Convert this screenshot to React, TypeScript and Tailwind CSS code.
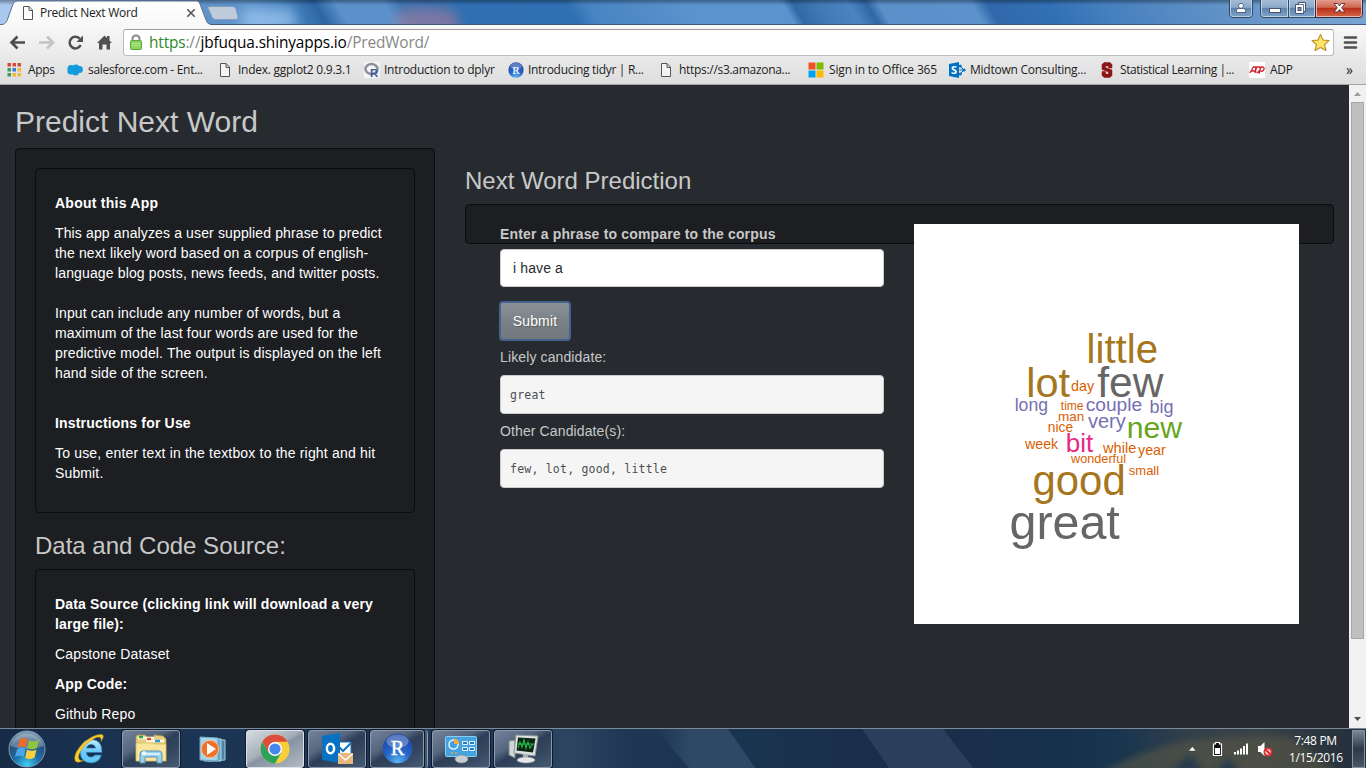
import React from "react";

const SEGOE = "font-['Open_Sans','Noto_Sans',sans-serif]";

function TabStrip() {
  return (
    <header className="relative h-[25px] w-full shrink-0 overflow-hidden bg-[#5a8fc8]">
      <div className="absolute -left-2 top-0 h-[25px] w-[1390px] skew-x-[30deg] bg-[linear-gradient(90deg,#a9c8f0_0px,#a9c8f0_20px,#5f93c9_215px,#5e95cd_260px,#4682bf_300px,#2c65a3_328px,#5b91cb_350px,#5b91cb_398px,#3a73b0_415px,#2f6fb2_470px,#2f70b3_580px,#4884c3_600px,#5a93cd_700px,#5a93cd_796px,#3168a6_806px,#4179b6_830px,#4a84c2_862px,#2f67a4_880px,#5b90c9_892px,#5b92cc_985px,#3069ab_1000px,#3270b4_1060px,#4680bf_1120px,#5a8dc4_1200px,#6f9dcd_1300px,#7aa6d2_1390px)]" />
      <div className="absolute left-[240px] top-2 h-6 w-14 rounded-full bg-[#a9cff5]/60 blur-[6px]" />
      <div className="absolute left-[395px] top-2 h-8 w-16 rounded-full bg-[#a77b9c]/60 blur-[6px]" />
      <div className="absolute inset-x-0 top-0 h-[5px] bg-gradient-to-b from-black/35 to-transparent" />
      <div className="absolute inset-x-0 bottom-0 h-px bg-[#41597a]" />
      <svg className="absolute left-0 top-0" width="250" height="25" viewBox="0 0 250 25">
        <defs>
          <linearGradient id="tab" x1="0" y1="0" x2="0" y2="1">
            <stop offset="0" stopColor="#fff" />
            <stop offset="1" stopColor="#f8f8f8" />
          </linearGradient>
        </defs>
        <path d="M0 24.500H2C6 24 7 21 8 18L13 4Q14 1 17 1H197Q199 1 200 4L206 20Q207.500 24.500 211 24.500V25.500H0Z" fill="url(#tab)" stroke="#566f8d" />
        <path d="M3 25.500Q7 24 8.500 19L9 25.500ZM205 25.500V19Q206 24 211 25.500Z" fill="#f8f8f8" />
        <path d="M209 6.500H233Q235 6.500 236 9L238 17Q238.500 19.500 236 19.500H215Q213 19.500 212 17L208 8Q207.500 6.500 209 6.500Z" fill="#bdcbdb" stroke="#7f9bb9" />
        <path d="M23.500 6.500H29L32.500 10V19.500H23.500ZM29 6.500V10.500H32.500" fill="#fff" stroke="#555" />
        <path d="M187.300 9.300L194.700 16.700M194.700 9.300L187.300 16.700" stroke="#555" strokeWidth="1.600" />
      </svg>
      <span className={`${SEGOE} absolute left-10 top-[5px] text-[12px] leading-4 tracking-[-0.28px] text-[#222] whitespace-nowrap`}>Predict Next Word</span>
      <svg className="absolute right-0 top-0" width="140" height="20" viewBox="0 0 140 20">
        <defs>
          <linearGradient id="caption" x1="0" y1="0" x2="0" y2="1">
            <stop offset="0" stopColor="#a5bdd8" />
            <stop offset=".45" stopColor="#8ca9ca" />
            <stop offset=".5" stopColor="#5e83af" />
            <stop offset="1" stopColor="#81a4ca" />
          </linearGradient>
          <linearGradient id="close" x1="0" y1="0" x2="0" y2="1">
            <stop offset="0" stopColor="#e5a596" />
            <stop offset=".45" stopColor="#cf6650" />
            <stop offset=".5" stopColor="#b92f1b" />
            <stop offset="1" stopColor="#d96947" />
          </linearGradient>
        </defs>
        <path d="M3.500-1V14Q3.500 17.500 7 17.500H23Q26.500 17.500 26.500 14V-1Z" fill="url(#caption)" stroke="#2f4866" />
        <path d="M4.500-1V14Q4.500 16.500 7 16.500H23Q25.500 16.500 25.500 14V-1" fill="none" stroke="#c7d7e8" strokeOpacity=".8" />
        <path d="M34.500-1V14Q34.500 17.500 38 17.500H89.500V-1Z" fill="url(#caption)" stroke="#2f4866" />
        <path d="M89.500-1V17.500H133Q136.500 17.500 136.500 14V-1Z" fill="url(#close)" stroke="#4a2430" />
        <path d="M35.500-1V14Q35.500 16.500 38 16.500H61.500V-1M63.500-1V16.500H88.500V-1M90.500-1V16.500H133Q135.500 16.500 135.500 14V-1" fill="none" stroke="#dce6f1" strokeOpacity=".7" />
        <path d="M62.500 0V17" stroke="#2f4866" />
        <circle cx="15" cy="5.800" r="2.500" fill="#fff" stroke="#3b4d64" strokeWidth=".8" />
        <path d="M10.500 12.500V10.500Q10.500 8.500 12.500 8.500H17.500Q19.500 8.500 19.500 10.500V12.500Z" fill="#fff" stroke="#3b4d64" strokeWidth=".8" />
        <rect x="43.500" y="8.500" width="11" height="4" fill="#fff" stroke="#44546a" />
        <path d="M72.500 2.500H79.500V11.500H77.500V13.500H69.500V4.500H72.500Z" fill="#fff" stroke="#44546a" />
        <path d="M72.500 4.500H77.500V11.500" fill="none" stroke="#44546a" strokeWidth=".8" />
        <rect x="72" y="7.500" width="3" height="3" fill="#7692b2" stroke="#44546a" />
        <path d="M108 3.500H111.500L113.500 6L115.500 3.500H119L115.700 7.800L119 12H115.500L113.500 9.600L111.500 12H108L111.300 7.800Z" fill="#fff" stroke="#542b35" strokeWidth=".9" />
      </svg>
    </header>
  );
}

function AddressBar() {
  return (
    <div className="flex h-[33px] w-full shrink-0 items-center bg-gradient-to-b from-[#f8f8f8] to-[#e9e9e9]">
      <svg width="123" height="33" viewBox="0 25 123 33" className="shrink-0">
        <path d="M25 42.500H12M17.500 36.500L11.500 42.500L17.500 48.500" fill="none" stroke="#4d4d4d" strokeWidth="2.600" />
        <path d="M39 42.500H52M47 36.500L53 42.500L47 48.500" fill="none" stroke="#c4c4c4" strokeWidth="2.600" />
        <path d="M80 39A5.800 5.800 0 1 0 80.700 45" fill="none" stroke="#505050" strokeWidth="2.500" />
        <path d="M83 35.500V42H76.500Z" fill="#505050" />
        <path d="M97 43L104.500 35.500L107 38V36H109.500V40.500L112 43H110V49.500H106.500V44.500H102.500V49.500H99V43Z" fill="#505050" />
      </svg>
      <div className="mt-px flex h-[27px] w-[1211px] items-center rounded-[3px] border border-[#bdbdbd] border-t-[#9f9a98] bg-white">
        <svg width="25" height="25" viewBox="124 30 25 25" className="shrink-0">
          <path d="M132.500 42V39Q132.500 35.500 136 35.500T139.500 39V42" fill="none" stroke="#8d8d8d" strokeWidth="2" />
          <rect x="130.500" y="40.500" width="11" height="9" rx="1" fill="#8fd45f" stroke="#58a63a" />
          <path d="M132 43.500H140M132 45.500H140" stroke="#b0e48c" />
        </svg>
        <span className={`${SEGOE} w-[1171px] pt-0.5 text-[15.4px] leading-6 tracking-[-0.14px] text-[#888] whitespace-nowrap`}>
          <span className="text-[#2c8a2c]">https</span>://<span className="text-black">jbfuqua.shinyapps.io</span>/PredWord/
        </span>
      </div>
      <svg width="56" height="33" viewBox="1310 25 56 33" className="-ml-6 shrink-0">
        <path d="M1320.500 34.500L1323 40L1329 40.600L1324.600 44.700L1326 50.500L1320.500 47.500L1315 50.500L1316.400 44.700L1312 40.600L1318 40Z" fill="#fbe36a" stroke="#c08a28" strokeWidth="1.100" strokeLinejoin="round" />
        <path d="M1345 37.500H1356M1345 42.500H1356M1345 47.500H1356" stroke="#505050" strokeWidth="2.600" strokeLinecap="round" />
      </svg>
    </div>
  );
}

const AppsIcon = () => (
  <svg width="16" height="16" viewBox="0 0 16 16">
    {["#d34836", "#d34836", "#d34836", "#3a9c5b", "#3b78e7", "#f3b632", "#3a9c5b", "#f3b632", "#f3b632"].map((c, i) => (
      <rect key={i} x={(i % 3) * 5 + 0.5} y={Math.floor(i / 3) * 5 + 1} width="3.500" height="3.500" fill={c} />
    ))}
  </svg>
);
const CloudIcon = () => (
  <svg width="16" height="16" viewBox="0 0 16 16">
    <g fill="#139bdb"><circle cx="4" cy="6.500" r="3.500" /><circle cx="9" cy="6" r="3.500" /><circle cx="12.500" cy="7.500" r="3.400" /><circle cx="4" cy="9" r="3.600" /><circle cx="8.500" cy="10" r="3.500" /></g>
  </svg>
);
const DocIcon = () => (
  <svg width="16" height="16" viewBox="0 0 16 16">
    <path d="M3.500 1.500H9L12.500 5V14.500H3.500ZM9 1.500V5.500H12.500" fill="#f4f4f4" stroke="#555" />
  </svg>
);
const RGrayIcon = () => (
  <svg width="16" height="16" viewBox="0 0 16 16">
    <rect width="16" height="16" fill="#f5f5f5" />
    <ellipse cx="7.500" cy="7" rx="6" ry="5" fill="none" stroke="#8c929b" strokeWidth="2.500" />
    <text x="6" y="14.500" fontSize="11.500" fontWeight="bold" fill="#41589a" fontFamily="Liberation Sans, sans-serif">R</text>
  </svg>
);
const RBlueIcon = ({ size }: { size: number }) => (
  <svg width={size} height={size} viewBox="0 0 32 32">
    <defs>
      <radialGradient id={`ball${size}`} cx=".5" cy=".95" r=".9">
        <stop offset="0" stopColor="#5ab4f4" />
        <stop offset=".5" stopColor="#2563c4" />
        <stop offset="1" stopColor="#1d49a5" />
      </radialGradient>
    </defs>
    <circle cx="16" cy="16" r="15.300" fill={`url(#ball${size})`} />
    <ellipse cx="16" cy="8.500" rx="11.500" ry="7" fill="#fff" opacity=".28" />
    <text x="16" y="23" textAnchor="middle" fontSize="21" fill="#fff" stroke="#fff" strokeWidth=".4" fontFamily="Liberation Serif, serif">R</text>
  </svg>
);
const WindowsTiles = () => (
  <svg width="16" height="16" viewBox="0 0 16 16">
    <path d="M.5.500H7.500V7.500H.5Z" fill="#f25022" /><path d="M8.500.500H15.500V7.500H8.500Z" fill="#7fba00" />
    <path d="M.5 8.500H7.500V15.500H.5Z" fill="#00a4ef" /><path d="M8.500 8.500H15.500V15.500H8.500Z" fill="#ffb900" />
  </svg>
);
const SharepointIcon = () => (
  <svg width="17" height="16" viewBox="0 0 17 16">
    <path d="M10.500 3.500L15 8L10.500 12.500M10.500 8H15" fill="none" stroke="#0072c6" strokeWidth="1" /><circle cx="11.300" cy="4" r="1.500" fill="#0072c6" /><circle cx="15" cy="8" r="1.600" fill="#0072c6" /><circle cx="11.300" cy="12" r="1.500" fill="#0072c6" />
    <path d="M0 2L10 0V16L0 14Z" fill="#0072c6" />
    <text x="5" y="12" textAnchor="middle" fontSize="11" fontWeight="bold" fill="#fff" fontFamily="Open Sans, sans-serif">S</text>
  </svg>
);
const StanfordIcon = () => (
  <svg width="16" height="16" viewBox="0 0 16 16">
    <path d="M5 .5H11L13 2.500V6H9.500V4H6.500V5.500L13 8V13.500L11 15.500H5L3 13.500V9.500H6.500V12H9.500V10L3 7.500V2.500Z" fill="#8c1515" stroke="#8c1515" strokeWidth=".5" />
  </svg>
);
const AdpIcon = () => (
  <svg width="16" height="16" viewBox="0 0 16 16">
    <rect width="16" height="16" fill="#fff" />
    <path d="M.8 11L4.500 5H7L6 11M2.500 9H6M6 11L7.500 5H10Q12 5.500 11 8T7.500 10.500M10 11.500L12 5H14Q16 6 14.500 8T11.500 9" fill="none" stroke="#d3222c" strokeWidth="1.300" />
  </svg>
);

const bookmarks = [
  { icon: <AppsIcon />, label: "Apps", item: "w-[60px]", text: "ml-[5px]" },
  { icon: <CloudIcon />, label: "salesforce.com - Ent...", item: "w-[150px]", text: "ml-[5px]" },
  { icon: <DocIcon />, label: "Index. ggplot2 0.9.3.1", item: "w-[147px]", text: "ml-[5px] tracking-[-0.26px]" },
  { icon: <RGrayIcon />, label: "Introduction to dplyr", item: "w-[144px]", text: "ml-1 tracking-[-0.25px]" },
  { icon: <RBlueIcon size={16} />, label: "Introducing tidyr | R...", item: "w-[150px]", text: "ml-1" },
  { icon: <DocIcon />, label: "https://s3.amazona...", item: "w-[150px]", text: "ml-[5px]" },
  { icon: <WindowsTiles />, label: "Sign in to Office 365", item: "w-[141px]", text: "ml-[5px] tracking-[-0.16px]" },
  { icon: <SharepointIcon />, label: "Midtown Consulting...", item: "w-[150px]", text: "ml-1 tracking-[-0.25px]" },
  { icon: <StanfordIcon />, label: "Statistical Learning |...", item: "w-[150px]", text: "ml-[5px] tracking-[-0.42px]" },
  { icon: <AdpIcon />, label: "ADP", item: "w-[97px]", text: "ml-[5px]" },
];

function BookmarksBar() {
  return (
    <nav className={`${SEGOE} flex h-[27px] w-full shrink-0 items-center border-b border-[#a5a5a5] bg-gradient-to-b from-[#e8e8e8] to-[#dedede] pb-0.5 pl-[7px] text-[12px] tracking-[-0.3px] text-[#1d1d1d]`}>
      {bookmarks.map((b) => (
        <div key={b.label} className={`flex shrink-0 items-center whitespace-nowrap ${b.item}`}>
          {b.icon}
          <span className={`leading-4 ${b.text}`}>{b.label}</span>
        </div>
      ))}
      <span className="text-sm leading-4">»</span>
    </nav>
  );
}

const well = "rounded border border-[#0c0d0e] bg-[#1c1e22] p-[19px] shadow-[inset_0_1px_1px_rgba(0,0,0,0.05)]";

function Sidebar() {
  return (
    <aside className={`${well} h-[640px] w-[420px] shrink-0`}>
      <section className={`${well} tracking-[0.135px] text-white`}>
        <h4 className="mt-[5px] font-bold tracking-[0.25px]">About this App</h4>
        <p className="mt-2.5 whitespace-nowrap">
          This app analyzes a user supplied phrase to predict<br />
          the next likely word based on a corpus of english-<br />
          language blog posts, news feeds, and twitter posts.<br />
          <br />
          Input can include any number of words, but a<br />
          maximum of the last four words are used for the<br />
          predictive model. The output is displayed on the left<br />
          hand side of the screen.
        </p>
        <h4 className="mt-[30px] font-bold tracking-[0.18px]">Instructions for Use</h4>
        <p className="mb-2.5 mt-2.5 whitespace-nowrap">
          <span className="tracking-[0.18px]">To use, enter text in the textbox to the right and hit</span><br />Submit.
        </p>
      </section>
      <h3 className="mb-2.5 mt-5 text-2xl leading-[26px] text-[#c8c8c8]">Data and Code Source:</h3>
      <section className={`${well} tracking-[0.16px] text-white`}>
        <h4 className="mt-[5px] whitespace-nowrap font-bold">Data Source (clicking link will download a very<br />large file):</h4>
        <p className="mt-2.5">Capstone Dataset</p>
        <h4 className="mt-2.5 font-bold">App Code:</h4>
        <p className="mt-2.5">Github Repo</p>
      </section>
    </aside>
  );
}

const words = [
  { t: "little", x: 1086.5, y: 363, s: 40.3, c: "#a6761d" },
  { t: "lot", x: 1026.3, y: 397, s: 41.5, c: "#a6761d" },
  { t: "few", x: 1097.3, y: 397, s: 42.5, c: "#666666" },
  { t: "day", x: 1070.9, y: 391, s: 14.4, c: "#d95f02" },
  { t: "long", x: 1014.7, y: 410.6, s: 17.6, c: "#7570b3" },
  { t: "time", x: 1060.8, y: 410, s: 12, c: "#d95f02" },
  { t: "couple", x: 1085.7, y: 411, s: 19.2, c: "#7570b3" },
  { t: "big", x: 1149.5, y: 412.9, s: 18, c: "#7570b3" },
  { t: "man", x: 1057.9, y: 421.2, s: 13.5, c: "#d95f02" },
  { t: "very", x: 1088, y: 427.8, s: 20, c: "#7570b3" },
  { t: "new", x: 1126.8, y: 438, s: 30.2, c: "#66a61e" },
  { t: "nice", x: 1047.8, y: 432, s: 13.8, c: "#d95f02" },
  { t: "week", x: 1025, y: 449, s: 14.2, c: "#d95f02" },
  { t: "bit", x: 1065.7, y: 452.3, s: 26, c: "#e7298a" },
  { t: "while", x: 1103, y: 453, s: 14.6, c: "#d95f02" },
  { t: "year", x: 1138, y: 454.9, s: 14.3, c: "#d95f02" },
  { t: "wonderful", x: 1071, y: 463, s: 12.7, c: "#d95f02" },
  { t: "small", x: 1128.8, y: 475, s: 13, c: "#d95f02" },
  { t: "good", x: 1032.5, y: 494.6, s: 41.9, c: "#a6761d" },
  { t: "great", x: 1009.5, y: 539.3, s: 48.4, c: "#666666" },
];

function Prediction() {
  return (
    <main className="w-[869px] shrink-0">
      <h3 className="mb-2.5 mt-5 text-2xl leading-[26px] text-[#c8c8c8]">Next Word Prediction</h3>
      <div className={`${well} flex h-10 items-start pl-[34px]!`}>
        <div className="w-[384px] shrink-0 tracking-[0.12px]">
          <label htmlFor="phrase" className="block font-bold tracking-[0.165px]">Enter a phrase to compare to the corpus</label>
          <input id="phrase" defaultValue="i have a" className="mt-[5px] block h-[38px] w-full rounded border border-[#cccccc] bg-white px-3 tracking-[0.12px] text-[#272b30] outline-none" />
          <button className="-ml-px mt-3.5 block h-10 w-[72px] rounded-[4px] border-2 border-[#46628f] bg-gradient-to-b from-[#8a9196] via-[#7a8288] to-[#70787d] text-white [text-shadow:1px_1px_1px_rgba(0,0,0,0.3)]">Submit</button>
          <div className="mt-1.5">Likely candidate:</div>
          <pre className="mt-2 h-[39px] rounded border border-[#cccccc] bg-[#f5f5f5] px-[9px] py-[9px] font-['DejaVu_Sans_Mono',monospace] text-[11.5px] tracking-[0.22px] text-[#4a4f54]">great</pre>
          <div className="mt-[7px]">Other Candidate(s):</div>
          <pre className="mt-2 h-[39px] rounded border border-[#cccccc] bg-[#f5f5f5] px-[9px] py-[9px] font-['DejaVu_Sans_Mono',monospace] text-[11.5px] tracking-[0.22px] text-[#4a4f54]">few, lot, good, little</pre>
        </div>
        <svg width="385" height="400" viewBox="914 224 385 400" className="ml-[30px] shrink-0 bg-white" fontFamily="Liberation Sans, Arial, sans-serif">
          {words.map((w) => (
            <text key={w.t} x={w.x} y={w.y} fontSize={w.s} fill={w.c}>{w.t}</text>
          ))}
        </svg>
      </div>
    </main>
  );
}

function Scrollbar() {
  return (
    <div className="flex h-full w-[17px] shrink-0 flex-col items-center bg-[#f1f1f1]">
      <svg width="17" height="17" viewBox="0 0 17 17" className="shrink-0"><path d="M5 11H12L8.500 7Z" fill="#9d9d9d" /></svg>
      <div className="h-[537px] w-[13px] shrink-0 border border-[#a8a8a8] bg-[#bfbfbf]" />
      <div className="flex-1" />
      <svg width="17" height="17" viewBox="0 0 17 17" className="shrink-0"><path d="M5 6H12L8.500 10Z" fill="#505050" /></svg>
    </div>
  );
}

const StartOrb = () => (
  <svg width="38" height="38" viewBox="0 0 38 38">
    <defs>
      <radialGradient id="orb" cx=".5" cy=".95" r=".9">
        <stop offset="0" stopColor="#3fd0f5" /><stop offset=".4" stopColor="#1d70a5" /><stop offset=".75" stopColor="#274f78" /><stop offset="1" stopColor="#7f9bb4" />
      </radialGradient>
    </defs>
    <circle cx="19" cy="19" r="18" fill="url(#orb)" stroke="#7f9db8" />
    <path d="M2.500 16A17 16 0 0 1 35.500 16Q19 22 2.500 16Z" fill="#fff" opacity=".28" />
    <path d="M12 9Q16 6.500 19.500 9.500L17.800 17.500Q13.500 15 9.500 17.500Z" fill="#ee6a2c" />
    <path d="M21 10Q26 12.500 31 10L28.800 18Q24 20.500 19.300 18Z" fill="#8ec63f" />
    <path d="M9.200 19Q13 16.500 17.500 19L15.700 27Q11.500 24.500 7 27Z" fill="#4ba5e8" />
    <path d="M19 19.500Q24 22 28.500 19.500L26.500 27.500Q21.500 30.500 17.200 27.700Z" fill="#fbcf3b" />
  </svg>
);
const IeIcon = () => (
  <svg width="32" height="32" viewBox="0 0 32 32">
    <defs><linearGradient id="ie" x1="0" y1="0" x2="0" y2="1"><stop offset="0" stopColor="#c3ecff" /><stop offset=".5" stopColor="#6ccaf7" /><stop offset="1" stopColor="#5ec4f5" /></linearGradient></defs>
    <path d="M28 19.500H12.500Q13 24 17 24Q19.500 24 21 22H27.500Q25 30 17 30Q6 29.500 6 18Q7 6.500 17.500 6.500Q28.500 7 28 19.500ZM12.500 15H21.500Q21 11.500 17.200 11.500Q13.500 11.500 12.500 15Z" fill="url(#ie)" stroke="#2372ae" strokeWidth=".7" />
    <path d="M27 8.500Q31.500 2 27.500 1.500Q20 1 10 9.500Q-1 20 1 27.500Q2.500 31 10 27.500Q3 28.500 5 21.500Q9 11 22 4.500Q28 2.500 27 8.500Z" fill="#f6cc2e" stroke="#b88a17" strokeWidth=".5" />
  </svg>
);
const FolderIcon = () => (
  <svg width="34" height="32" viewBox="0 0 34 32">
    <path d="M2 28V3L4 2H11L13 4H20V2L29 3L32 6V28Z" fill="#e9cf7d" stroke="#b59748" strokeWidth=".7" />
    <path d="M4 5H20M12 8H30" stroke="#fffbe5" strokeWidth="2.500" />
    <path d="M5 4H9" stroke="#25a54b" strokeWidth="2.500" /><path d="M13 6H17" stroke="#da4c37" strokeWidth="2.500" /><path d="M21 8H26" stroke="#3597d8" strokeWidth="2.500" />
    <path d="M2 10H18L20 11H32V28H2Z" fill="#fae69a" stroke="#cbb05e" strokeWidth=".6" />
    <path d="M6 30V21Q6 18 9 18H25Q28 18 28 21V30H23V24H11V30Z" fill="#9bd2ee" stroke="#5393b7" />
    <path d="M8 21H26" stroke="#e5f7ff" strokeWidth="1.500" />
    <circle cx="10" cy="20" r="2" fill="#fff" opacity=".8" />
  </svg>
);
const MediaIcon = () => (
  <svg width="28" height="28" viewBox="0 0 28 28">
    <path d="M9 4L26 5V25L9 26Z" fill="#4e83a4" stroke="#a3d0e5" /><path d="M5 3L22 4V26L5 26Z" fill="#6fa8c8" stroke="#a8d7ec" /><path d="M1 2L19 3V26L1 25Z" fill="#a6d5ea" stroke="#6fa4c2" />
    <circle cx="11" cy="14" r="8.700" fill="#ee702b" stroke="#f9bf91" /><path d="M8 8V20L17 14Z" fill="#fff" />
  </svg>
);
const ChromeIcon = () => (
  <svg width="30" height="30" viewBox="0 0 30 30">
    <circle cx="15" cy="15" r="14.500" fill="#f7cf3d" />
    <path d="M2.400 7.800A14.500 14.500 0 0 0 15 29.500L21.300 18.500L15 15L8.700 18.600Z" fill="#2da25f" />
    <path d="M2.400 7.800A14.500 14.500 0 0 1 27.600 7.800H15Q8 9 8.700 18.600Z" fill="#dc4d3e" />
    <circle cx="15" cy="15" r="7" fill="#fff" /><circle cx="15" cy="15" r="5.600" fill="#4687ee" />
  </svg>
);
const OutlookIcon = () => (
  <svg width="32" height="32" viewBox="0 0 32 32">
    <rect x="17" y="9" width="13" height="12" fill="#fff" stroke="#1972b9" /><path d="M18 14L22 18L30 10" fill="none" stroke="#1972b9" strokeWidth="2" />
    <path d="M1 3L19 0V30L1 27Z" fill="#0871c4" /><ellipse cx="9.500" cy="15.500" rx="3.600" ry="4.700" fill="none" stroke="#fff" strokeWidth="2.500" />
    <rect x="17" y="20" width="15" height="11" fill="#e9b67c" /><path d="M17.500 21L24.500 27L31.500 21" fill="none" stroke="#fff" strokeWidth="1.400" />
  </svg>
);
const PanelIcon = () => (
  <svg width="34" height="30" viewBox="0 0 34 30">
    <rect x="1.500" y="2.500" width="31" height="20" rx="1" fill="#43a2df" stroke="#8bcdf3" />
    <circle cx="9.500" cy="10.500" r="4.500" fill="none" stroke="#e4f4ff" strokeWidth="1.500" /><path d="M10 10V4.500A5 5 0 0 1 15 10Z" fill="#f7a93a" />
    <path d="M18.500 7.500H23.500V10.500H18.500ZM25.500 7.500H30.500V10.500H25.500ZM18.500 13.500H23.500V16.500H18.500ZM25.500 13.500H30.500V16.500H25.500Z" fill="#237fb5" stroke="#e4f4ff" />
    <circle cx="8" cy="19" r="1" fill="#f3a63c" /><circle cx="12" cy="19" r="1" fill="#f3a63c" />
    <ellipse cx="17.500" cy="25" rx="6.500" ry="4" fill="#c7cdd1" stroke="#858e96" strokeWidth=".6" />
  </svg>
);
const MonitorIcon = () => (
  <svg width="32" height="30" viewBox="0 0 32 30">
    <path d="M2 7L8 6V24L2 21Z" fill="#d1d5d6" stroke="#7c8589" /><path d="M9 1L31 2L28 22L7 19Z" fill="#dee2df" stroke="#8e9796" />
    <path d="M11 3.500L28.500 4.500L26 18.500L9.500 16.500Z" fill="#0b2614" /><path d="M11 14L13 8L15 13L17 6L19 14L21 8L23 14L26 10M10 10H27" fill="none" stroke="#28b84a" strokeWidth="1.100" />
    <path d="M16 20H21V24H16Z" fill="#aeb5b7" /><ellipse cx="19" cy="26" rx="9" ry="3" fill="#e4e7e8" stroke="#92999e" strokeWidth=".6" />
  </svg>
);

const button = "relative flex h-[38px] shrink-0 items-center justify-center rounded-[3px] border border-[#8e9aa9] shadow-[0_0_0_1px_#0c1a2b]";
const dark = "bg-[linear-gradient(150deg,#74839a_0%,#55667f_35%,#2d3f58_50%,#34475f_70%,#475b74_100%)]";

function Taskbar() {
  return (
    <footer className="relative flex h-10 w-full shrink-0 items-center overflow-hidden border-t border-[#7c8b9b] bg-[linear-gradient(90deg,#172b47_0px,#1a3352_120px,#203a5b_500px,#2e4562_570px,#1f3654_630px,#19344f_740px,#1a2e4b_860px,#1a2e4a_960px,#19304c_1000px,#16304c_1060px,#19354f_1120px,#33404a_1190px,#3a4247_1260px,#27323c_1340px,#22303e_1366px)]">
      <svg className="absolute left-0 top-0" width="1366" height="40" viewBox="0 728 1366 40">
        <defs>
          <filter id="soft" x="-20%" y="-50%" width="140%" height="200%"><feGaussianBlur stdDeviation="3" /></filter>
          <linearGradient id="streak" x1="0" y1="0" x2="1" y2="0"><stop offset="0" stopColor="#2e4865" stopOpacity="0" /><stop offset=".35" stopColor="#2e4865" /><stop offset="1" stopColor="#2e4865" /></linearGradient>
        </defs>
        <path d="M655 728H728L756 768H690Z" fill="url(#streak)" />
        <path d="M862 728H943L974 768H890Z" fill="#293f5b" />
        <path d="M1100 772Q1150 745 1190 740T1290 736L1340 772Z" fill="#5b5a45" opacity=".55" filter="url(#soft)" />
        <path d="M1170 770L1190 754L1204 770ZM1215 772L1228 757L1240 772Z" fill="#1c3550" opacity=".8" filter="url(#soft)" />
      </svg>
      <div className="relative ml-2 flex w-[66px] shrink-0"><StartOrb /></div>
      <div className="relative flex w-12 shrink-0"><IeIcon /></div>
      <div className={`${button} ${dark} w-[58px]`}><FolderIcon /></div>
      <div className="relative flex w-[66px] shrink-0 justify-center pr-px"><MediaIcon /></div>
      <div className={`${button} w-[58px] bg-[linear-gradient(150deg,#d6dbe1_0%,#a5aeb9_45%,#8793a1_52%,#b2bbc5_100%)] border-[#dce2e8]!`}><ChromeIcon /></div>
      <div className={`${button} ${dark} ml-1 w-[58px]`}><OutlookIcon /></div>
      <div className={`${button} ${dark} ml-1 w-[54px]`}><RBlueIcon size={31} /></div>
      <div className="relative ml-px h-[38px] w-[3px] shrink-0 rounded-r border-r border-[#8e9aa9] bg-[#44566f]" />
      <div className={`${button} ${dark} ml-1 w-[58px]`}><PanelIcon /></div>
      <div className={`${button} ${dark} ml-1 w-[58px]`}><MonitorIcon /></div>
      <div className="flex-1" />
      <svg width="90" height="30" viewBox="1186 734 90 30" className="relative mr-[13px] shrink-0">
        <path d="M1188.500 751H1196L1192.300 746.500Z" fill="#fff" stroke="#222" strokeWidth=".4" />
        <path d="M1213.500 744H1215.500V742.500H1219.500V744H1221.500V755.500H1213.500Z" fill="#111" stroke="#fff" strokeWidth="1.200" /><path d="M1215 748H1220V754H1215Z" fill="#fff" />
        <path d="M1235 754.500V752M1238 754.500V750.500M1241 754.500V748.500M1244 754.500V746M1247 754.500V743.500" stroke="#fff" strokeWidth="2" />
        <path d="M1258 746H1260.500L1264.500 742V756L1260.500 752H1258Z" fill="#fff" />
        <circle cx="1268" cy="752" r="3.600" fill="#f0d6d6" stroke="#e32d31" strokeWidth="1.900" /><path d="M1265.500 749.500L1270.500 754.500" stroke="#e32d31" strokeWidth="1.900" />
      </svg>
      <div className={`${SEGOE} relative w-[53px] shrink-0 text-center text-[12px] leading-[17px] tracking-[-0.35px] text-white whitespace-nowrap`}>
        <div>7:48 PM</div>
        <div>1/15/2016</div>
      </div>
      <div className="relative ml-2.5 mr-px h-[38px] w-[13px] shrink-0 border border-[#8492a1] bg-gradient-to-b from-[#7b8794] via-[#2f3a46] to-[#4a5661]" />
    </footer>
  );
}

export default function App() {
  return (
    <div className="flex h-[768px] w-[1366px] flex-col overflow-hidden bg-[#272b30] font-['Liberation_Sans',Arial,sans-serif] text-sm leading-5 text-[#c8c8c8]">
      <TabStrip />
      <AddressBar />
      <BookmarksBar />
      <div className="flex h-[643px] shrink-0 overflow-hidden">
        <div className="h-full w-[1349px] shrink-0 overflow-hidden px-[15px]">
          <h2 className="mb-2.5 mt-5 text-[30px] leading-[33px]">Predict Next Word</h2>
          <div className="flex gap-[30px]">
            <Sidebar />
            <Prediction />
          </div>
        </div>
        <Scrollbar />
      </div>
      <Taskbar />
    </div>
  );
}
